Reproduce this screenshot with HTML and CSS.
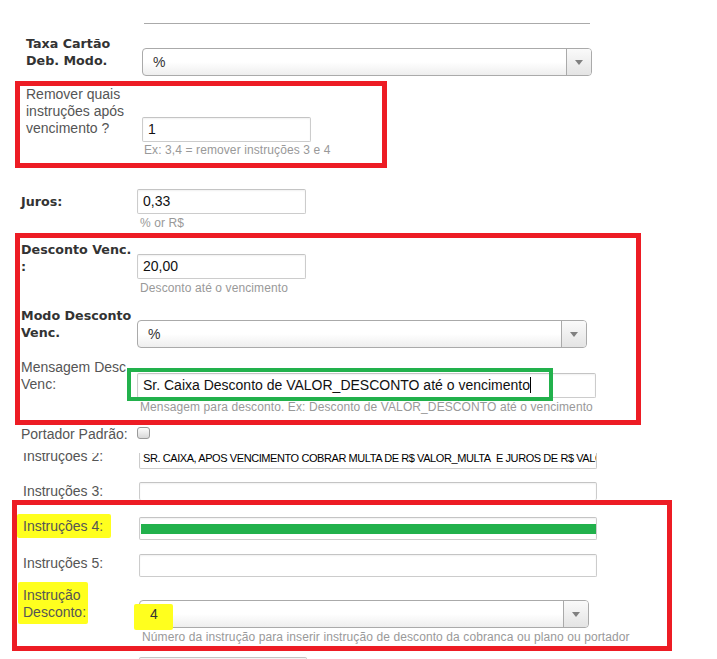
FILE: index.html
```html
<!DOCTYPE html>
<html lang="pt-BR">
<head>
    <meta charset="UTF-8">
    <title>Configuração de cobrança</title>
    <link rel="stylesheet" href="styles.css">
</head>
<body>
    <div class="page">
        <div class="rule"></div>

        <!-- Taxa cartão -->
        <div class="row row-taxa">
            <div class="lbl lbl-b">Taxa Cartão Deb. Modo.</div>
            <div class="field">
                <div class="select w-450"><span class="sel-text">%</span><span class="sel-btn"><i class="caret"></i></span></div>
            </div>
        </div>

        <!-- bloco 1 -->
        <div class="mark mark-1">
            <div class="row">
                <div class="lbl">Remover quais instruções após vencimento ?</div>
                <div class="field f-remover">
                    <div class="input w-169">1</div>
                    <div class="help">Ex: 3,4 = remover instruções 3 e 4</div>
                </div>
            </div>
        </div>

        <div class="row row-juros">
            <div class="lbl lbl-b">Juros:</div>
            <div class="field">
                <div class="input w-169">0,33</div>
                <div class="help">% or R$</div>
            </div>
        </div>

        <!-- bloco 2 -->
        <div class="mark mark-2">
            <div class="row row-desc">
                <div class="lbl lbl-b">Desconto Venc. :</div>
                <div class="field">
                    <div class="input w-169">20,00</div>
                    <div class="help">Desconto até o vencimento</div>
                </div>
            </div>
            <div class="row row-modo">
                <div class="lbl lbl-b">Modo Desconto Venc.</div>
                <div class="field">
                    <div class="select w-450"><span class="sel-text">%</span><span class="sel-btn"><i class="caret"></i></span></div>
                </div>
            </div>
            <div class="row row-msg">
                <div class="lbl">Mensagem Desc Venc:</div>
                <div class="field">
                    <div class="input w-459 has-frame">Sr. Caixa Desconto de VALOR_DESCONTO até o vencimento<span class="cursor"></span><span class="frame-green"></span></div>
                    <div class="help">Mensagem para desconto. Ex: Desconto de VALOR_DESCONTO até o vencimento</div>
                </div>
            </div>
        </div>

        <div class="row row-portador">
            <div class="lbl">Portador Padrão:</div>
            <div class="field"><span class="check"></span></div>
        </div>

        <!-- recorte: instruções 2 -->
        <div class="cut">
            <div class="row cut-inner">
                <div class="lbl">Instruções 2:</div>
                <div class="field">
                    <div class="input w-458 upper">SR. CAIXA, APOS VENCIMENTO COBRAR MULTA DE R$ VALOR_MULTA&nbsp; E JUROS DE R$ VALOR_JUROS</div>
                </div>
            </div>
        </div>

        <div class="row row-inst3">
            <div class="lbl">Instruções 3:</div>
            <div class="field">
                <div class="input w-458 open-bottom"></div>
            </div>
        </div>

        <!-- bloco 3 -->
        <div class="mark mark-3">
            <div class="row row-inst4">
                <div class="lbl"><span class="hl hl-4"></span><span class="txt">Instruções 4:</span></div>
                <div class="field">
                    <div class="input w-458 slim"><div class="bar-green"></div></div>
                </div>
            </div>
            <div class="row row-inst5">
                <div class="lbl">Instruções 5:</div>
                <div class="field">
                    <div class="input w-458 slim"></div>
                </div>
            </div>
            <div class="row row-instdesc">
                <div class="lbl"><span class="hl hl-desc"></span><span class="txt">Instrução Desconto:</span></div>
                <div class="field">
                    <div class="select w-450"><span class="hl hl-val"></span><span class="sel-text txt">4</span><span class="sel-btn"><i class="caret"></i></span></div>
                    <div class="help">Número da instrução para inserir instrução de desconto da cobranca ou plano ou portador</div>
                </div>
            </div>
        </div>

        <div class="tail">
            <div class="input w-168"></div>
        </div>
    </div>
</body>
</html>
```

FILE: styles.css
```css
* {
    box-sizing: border-box;
}

html, body {
    margin: 0;
    padding: 0;
    background: #fff;
}

body {
    font-family: 'Liberation Sans', Arial, sans-serif;
    font-size: 14px;
    color: #555;
    overflow: hidden;
    height: 659px;
}

.page {
    width: 717px;
}

.rule {
    margin: 23px 0 0 144px;
    width: 446px;
    border-top: 1px solid #aaa;
}

/* linhas do formulário */
.row {
    display: flex;
    align-items: flex-start;
}

.lbl {
    width: 116px;
    flex: none;
    padding-right: 4px;
    line-height: 17px;
    position: relative;
}

.lbl-b {
    font-family: 'DejaVu Sans', Verdana, sans-serif;
    font-weight: bold;
    font-size: 12.7px;
    color: #333;
}

.field {
    flex: none;
}

.help {
    font-size: 12px;
    line-height: 14px;
    color: #999;
    margin-top: 2px;
    padding-left: 3px;
    letter-spacing: 0.1px;
    white-space: nowrap;
}

/* campos */
.input {
    height: 25px;
    border: 1px solid #ccc;
    border-top-color: #c4c4c4;
    border-radius: 2px;
    background: #fff;
    box-shadow: inset 0 1px 2px rgba(0, 0, 0, 0.06);
    padding: 0 5px;
    line-height: 23px;
    color: #111;
    white-space: nowrap;
    overflow: hidden;
    position: relative;
}

.input.slim {
    height: 23px;
}

.input.upper {
    font-size: 11px;
    padding: 2px 0 0 3px;
    letter-spacing: -0.42px;
    color: #000;
}

.input.open-bottom {
    height: 18px;
    border-bottom: none;
}

.input.has-frame {
    overflow: visible;
}

.cursor {
    display: inline-block;
    width: 1px;
    height: 16px;
    background: #000;
    vertical-align: -3px;
}

.w-168 { width: 168px; }
.w-169 { width: 169px; }
.w-450 { width: 450px; }
.w-458 { width: 458px; }
.w-459 { width: 459px; }

.select {
    height: 28px;
    border: 1px solid #aaa;
    border-radius: 4px;
    background: linear-gradient(#fff 0%, #fff 50%, #eee 100%);
    display: flex;
    position: relative;
}

.sel-text {
    flex: 1;
    padding-left: 10px;
    line-height: 26px;
    color: #333;
}

.sel-btn {
    width: 25px;
    border-left: 1px solid #aaa;
    background: linear-gradient(#fafafa, #e4e4e4);
    border-radius: 0 3px 3px 0;
    display: flex;
    align-items: center;
    justify-content: center;
}

.caret {
    width: 0;
    height: 0;
    border-left: 4px solid transparent;
    border-right: 4px solid transparent;
    border-top: 5px solid #808080;
}

.check {
    display: block;
    width: 13px;
    height: 12px;
    margin-top: 1px;
    border: 1px solid #9a9a9a;
    border-radius: 3px;
    background: linear-gradient(#fdfdfd, #d8d8d8);
}

/* posições das linhas */
.row-taxa {
    margin-top: 11px;
    padding-left: 26px;
}

.row-taxa .field {
    margin-top: 13px;
}

.row-juros {
    margin-top: 21px;
    padding-left: 21px;
}

.row-juros .lbl {
    margin-top: 4px;
}

.row-portador {
    margin-top: 1px;
    padding-left: 21px;
}

.cut {
    margin-top: 10px;
    height: 17px;
    overflow: hidden;
}

.cut-inner {
    margin-top: -9px;
    padding-left: 23px;
}

.cut-inner .lbl {
    margin-top: 4px;
}

.row-inst3 {
    margin-top: 12px;
    padding-left: 23px;
}

.row-inst3 .lbl {
    margin-top: 1px;
}

.tail {
    margin-top: 6px;
    padding-left: 139px;
}

/* marcações (anotações sobre o print) */
.mark {
    border: 5px solid #ed1c24;
}

.mark-1 {
    margin: 5px 0 0 15px;
    width: 372px;
    height: 87px;
    padding-left: 6px;
}

.f-remover {
    padding-top: 31px;
}

.f-remover .help {
    margin-top: 1px;
    padding-left: 2px;
}

.mark-2 {
    margin: 3px 0 0 15px;
    width: 626px;
    height: 192px;
    padding: 3px 0 0 1px;
}

.row-desc .field {
    margin-top: 13px;
}

.row-modo {
    margin-top: 12px;
}

.row-modo .field {
    margin-top: 13px;
}

.row-msg {
    margin-top: 11px;
}

.row-msg .field {
    margin-top: 14px;
}

.frame-green {
    position: absolute;
    left: -11px;
    top: -6px;
    width: 426px;
    height: 33px;
    border: 4px solid #22b14c;
}

.mark-3 {
    margin-left: 12px;
    width: 660px;
    height: 151px;
    padding: 12px 0 0 6px;
}

.row-inst4 .lbl {
    margin-top: 1px;
}

.bar-green {
    margin: 6px 0 0 -4px;
    width: 455px;
    height: 10px;
    background: #22b14c;
}

.row-inst5 {
    margin-top: 14px;
}

.row-inst5 .lbl {
    margin-top: 1px;
}

.row-instdesc {
    margin-top: 10px;
}

.row-instdesc .field {
    margin-top: 13px;
}

.txt {
    position: relative;
}

.hl {
    position: absolute;
    background: #ffff1e;
    border-radius: 2px;
}

.hl-4 {
    left: -6px;
    top: -4px;
    width: 94px;
    height: 24px;
}

.hl-desc {
    left: -5px;
    top: -5px;
    width: 70px;
    height: 42px;
}

.hl-val {
    left: -6px;
    top: 3px;
    width: 39px;
    height: 26px;
}
```
